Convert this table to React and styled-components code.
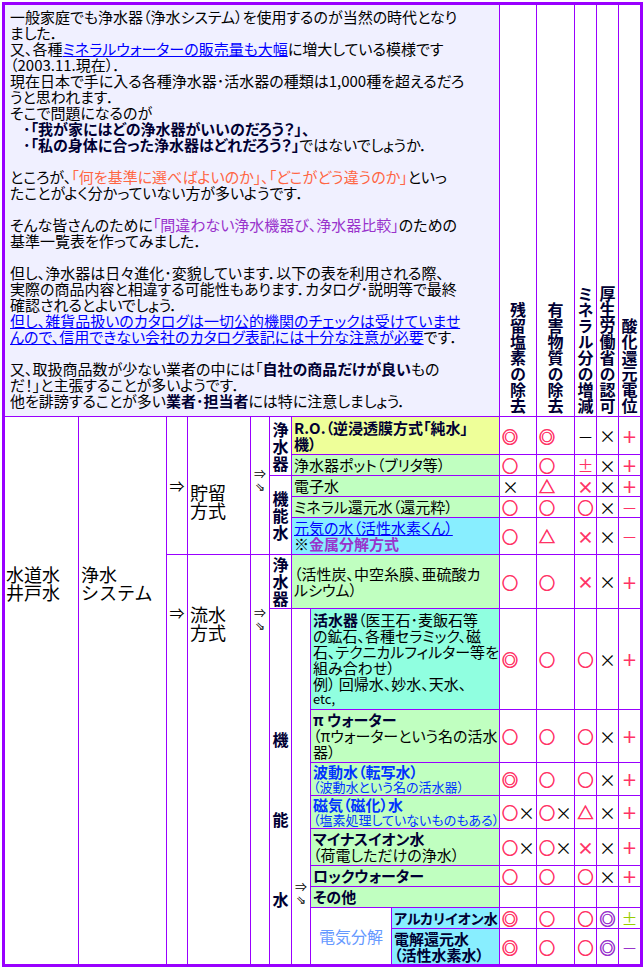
import React from 'react';
import styled, { createGlobalStyle } from 'styled-components';

const PURPLE = '#9900ff';
const PINK = '#ff3366';
const VIOLET = '#9933cc';
const LIME = '#99cc00';

const GlobalStyle = createGlobalStyle`
  html, body {
    margin: 0;
    padding: 0;
    background: #fff;
  }
  body {
    font-family: "Noto Sans CJK JP", "Noto Sans", sans-serif;
    color: #000;
  }
`;

// grid: every line of the table is the 1px gap showing the purple background
const Table = styled.div`
  display: grid;
  grid-template-columns: 73px 87px 20px 62px 18px 21px 18px 80px 107px 36px 37px 21px 21px 21px;
  grid-template-rows: 411px 37px 20px 20px 20px 36px 53px 100px 52px 32px 32px 36px 20px 20px 20px 35px;
  gap: 1px;
  width: max-content;
  margin: 2px 0 0 2px;
  border: 3px solid ${PURPLE};
  background: ${PURPLE};
`;

const Cell = styled.div`
  grid-row: ${(p) => p.$r};
  grid-column: ${(p) => p.$c};
  background: ${(p) => p.$bg || '#fff'};
  min-width: 0;
  overflow: hidden;
`;

const Intro = styled(Cell)`
  background: #f0f0ff;
  padding: 4px 0 0 5px;
  font-size: 15px;
  line-height: 16px;
  white-space: nowrap;
  font-feature-settings: "palt";
`;

const Line = styled.div`
  min-height: 16px;
`;

const Indent = styled.span`
  padding-left: 13px;
`;

const Strong = styled.b`
  font-weight: bold;
  color: ${(p) => p.$color || '#000033'};
`;

const Anchor = styled.a`
  color: #0000ff;
  text-decoration: underline;
`;

const Tint = styled.span`
  color: ${(p) => p.$color};
  font-weight: ${(p) => (p.$bold ? 'bold' : 'normal')};
`;

const HeadCell = styled(Cell)`
  display: flex;
  align-items: flex-end;
  justify-content: center;
  padding-bottom: 2px;
`;

const VText = styled.span`
  writing-mode: vertical-rl;
  font-size: 16px;
  line-height: 1;
  font-weight: bold;
  color: #000033;
`;

const BigText = styled(Cell)`
  padding: ${(p) => p.$pt}px 0 0 ${(p) => p.$pl}px;
  font-size: 18px;
  line-height: 18px;
`;

const Arrow = styled(Cell)`
  display: flex;
  flex-direction: column;
  align-items: center;
  justify-content: ${(p) => (p.$pt != null ? 'flex-start' : 'center')};
  padding-top: ${(p) => p.$pt || 0}px;
  font-size: ${(p) => (p.$small ? 12 : 15)}px;
  line-height: ${(p) => (p.$small ? 12 : 16)}px;
`;

const Kind = styled(Cell)`
  display: flex;
  flex-direction: column;
  align-items: center;
  justify-content: ${(p) => (p.$pt != null ? 'flex-start' : 'center')};
  padding-top: ${(p) => p.$pt || 0}px;
  gap: ${(p) => p.$gap || 0}px;
  font-size: 16px;
  line-height: 17px;
  font-weight: bold;
  color: #000033;
`;

const Item = styled(Cell)`
  display: flex;
  flex-direction: column;
  justify-content: center;
  padding-left: 2px;
  font-size: ${(p) => p.$size || 15}px;
  line-height: 16px;
  white-space: nowrap;
  font-feature-settings: "palt";
`;

const Small = styled.span`
  font-size: 13px;
  line-height: 14px;
  color: ${(p) => p.$color || 'inherit'};
`;

const Electro = styled(Cell)`
  display: flex;
  align-items: center;
  justify-content: center;
  font-size: 16px;
  color: #6699ff;
`;

const Value = styled(Cell)`
  display: flex;
  align-items: center;
  justify-content: ${(p) => (p.$left ? 'flex-start' : 'center')};
  padding-left: ${(p) => (p.$left ? 2 : 0)}px;
`;

// circles and triangles get a thin stroke so they read as heavy as the bitmap originals
const Sym = styled.span`
  color: ${(p) => p.$color};
  font-size: ${(p) => p.$size}px;
  line-height: 1;
  font-weight: ${(p) => (p.$bold ? 'bold' : 'normal')};
  -webkit-text-stroke: ${(p) => p.$stroke}px ${(p) => p.$color};
`;

const SHAPES = '◎○△';

const introLines = [
  <>一般家庭でも浄水器（浄水システム）を使用するのが当然の時代となり</>,
  <>ました．</>,
  <>又、各種<Anchor>ミネラルウォーターの販売量も大幅</Anchor>に増大している模様です</>,
  <>（2003.11.現在）．</>,
  <>現在日本で手に入る各種浄水器･活水器の種類は1,000種を超えるだろ</>,
  <>うと思われます．</>,
  <>そこで問題になるのが</>,
  <><Indent /><Strong>･「我が家にはどの浄水器がいいのだろう？」、</Strong></>,
  <><Indent /><Strong>･「私の身体に合った浄水器はどれだろう？」</Strong>ではないでしょうか．</>,
  null,
  <>ところが、<Tint $color="#ff6644">「何を基準に選べばよいのか」、「どこがどう違うのか」</Tint>といっ</>,
  <>たことがよく分かっていない方が多いようです．</>,
  null,
  <>そんな皆さんのために<Tint $color={VIOLET}>「間違わない浄水機器び、浄水器比較」</Tint>のための</>,
  <>基準一覧表を作ってみました．</>,
  null,
  <>但し、浄水器は日々進化･変貌しています．以下の表を利用される際、</>,
  <>実際の商品内容と相違する可能性もあります．カタログ･説明等で最終</>,
  <>確認されるとよいでしょう．</>,
  <><Anchor>但し、雑貨品扱いのカタログは一切公的機関のチェックは受けていませ</Anchor></>,
  <><Anchor>んので、信用できない会社のカタログ表記には十分な注意が必要</Anchor>です．</>,
  null,
  <>又、取扱商品数が少ない業者の中には「<Strong>自社の商品だけが良い</Strong>もの</>,
  <>だ！」と主張することが多いようです．</>,
  <>他を誹謗することが多い<Strong>業者･担当者</Strong>には特に注意しましょう．</>,
];

const heads = ['残留塩素の除去', '有害物質の除去', 'ミネラル分の増減', '厚生労働省の認可', '酸化還元電位'];

const P = PINK;
const K = '#000';
// values per body row (grid rows 2..16), each cell a list of [glyph, colour]
const values = [
  [[['◎', P]], [['◎', P]], [['－', K]], [['×', K]], [['＋', P]]],
  [[['○', P]], [['○', P]], [['±', P]], [['×', K]], [['＋', P]]],
  [[['×', K]], [['△', P]], [['×', P]], [['×', K]], [['＋', P]]],
  [[['○', P]], [['○', P]], [['○', P]], [['×', K]], [['－', P]]],
  [[['○', P]], [['△', P]], [['×', P]], [['×', K]], [['－', P]]],
  [[['○', P]], [['○', P]], [['×', P]], [['×', K]], [['＋', P]]],
  [[['◎', P]], [['○', P]], [['○', P]], [['×', K]], [['＋', P]]],
  [[['○', P]], [['○', P]], [['○', P]], [['×', K]], [['＋', P]]],
  [[['◎', P]], [['○', P]], [['○', P]], [['×', K]], [['＋', P]]],
  [[['○', P], ['×', K]], [['○', P], ['×', K]], [['△', P]], [['×', K]], [['＋', P]]],
  [[['○', P], ['×', K]], [['○', P], ['×', K]], [['×', P]], [['×', K]], [['＋', P]]],
  [[['○', P]], [['○', P]], [['○', P]], [['×', K]], [['＋', P]]],
  [[], [], [], [], []],
  [[['◎', P]], [['○', P]], [['○', P]], [['◎', VIOLET]], [['±', LIME]]],
  [[['◎', P]], [['○', P]], [['○', P]], [['◎', VIOLET]], [['－', VIOLET]]],
];

const chars = (text) => [...text].map((ch, i) => <span key={i}>{ch}</span>);

const GREEN = '#c0ffc0';
const CYAN = '#88eeff';

export default function App() {
  return (
    <>
      <GlobalStyle />
      <Table>
        <Intro $r="1" $c="1 / 10">
          {introLines.map((l, i) => (
            <Line key={i}>{l}</Line>
          ))}
        </Intro>
        {heads.map((h, i) => (
          <HeadCell key={h} $r="1" $c={`${10 + i}`}>
            <VText>{h}</VText>
          </HeadCell>
        ))}

        <BigText $r="2 / 17" $c="1" $pt={148} $pl={1}>
          水道水<br />井戸水
        </BigText>
        <BigText $r="2 / 17" $c="2" $pt={148} $pl={2}>
          浄水<br />システム
        </BigText>

        <Arrow $r="2 / 7" $c="3">⇒</Arrow>
        <BigText $r="2 / 7" $c="4" $pt={66} $pl={2}>
          貯留<br />方式
        </BigText>
        <Arrow $r="2 / 7" $c="5" $small $pt={51}>
          <span>⇒</span>
          <span>⇘</span>
        </Arrow>
        <Kind $r="2 / 4" $c="6">{chars('浄水器')}</Kind>
        <Kind $r="4 / 7" $c="6">{chars('機能水')}</Kind>

        <Arrow $r="7 / 17" $c="3" $pt={50}>⇒</Arrow>
        <BigText $r="7 / 17" $c="4" $pt={50} $pl={2}>
          流水<br />方式
        </BigText>
        <Arrow $r="7 / 17" $c="5" $small $pt={52}>
          <span>⇒</span>
          <span>⇘</span>
        </Arrow>
        <Kind $r="7" $c="6">{chars('浄水器')}</Kind>
        <Kind $r="8 / 17" $c="6" $pt={122} $gap={63}>{chars('機能水')}</Kind>
        <Arrow $r="8 / 17" $c="7" $small $pt={272}>
          <span>⇒</span>
          <span>⇘</span>
        </Arrow>

        <Item $r="2" $c="7 / 10" $bg="#eeff99">
          <Strong>R.O.（逆浸透膜方式「純水」</Strong>
          <Strong>機）</Strong>
        </Item>
        <Item $r="3" $c="7 / 10" $bg={GREEN}>浄水器ポット（ブリタ等）</Item>
        <Item $r="4" $c="7 / 10" $bg={GREEN}>電子水</Item>
        <Item $r="5" $c="7 / 10" $bg={GREEN}>ミネラル還元水（還元粋）</Item>
        <Item $r="6" $c="7 / 10" $bg={CYAN}>
          <span><Anchor>元気の水（活性水素くん）</Anchor></span>
          <span>※<Tint $color={VIOLET} $bold>金属分解方式</Tint></span>
        </Item>
        <Item $r="7" $c="7 / 10" $bg={GREEN}>
          <span>（活性炭、中空糸膜、亜硫酸カ</span>
          <span>ルシウム）</span>
        </Item>
        <Item $r="8" $c="8 / 10" $bg="#90ffe0">
          <span><Strong>活水器</Strong>（医王石･麦飯石等</span>
          <span>の鉱石、各種セラミック、磁</span>
          <span>石、テクニカルフィルター等を</span>
          <span>組み合わせ）</span>
          <span>例） 回帰水、妙水、天水、</span>
          <Small>etc,</Small>
        </Item>
        <Item $r="9" $c="8 / 10" $bg={GREEN}>
          <Strong>π ウォーター</Strong>
          <span>（πウォーターという名の活水</span>
          <span>器）</span>
        </Item>
        <Item $r="10" $c="8 / 10" $bg={GREEN}>
          <Strong $color="#0033ff">波動水（転写水）</Strong>
          <Small $color="#0033ff">（波動水という名の活水器）</Small>
        </Item>
        <Item $r="11" $c="8 / 10" $bg={GREEN}>
          <Strong $color="#0033ff">磁気（磁化）水</Strong>
          <Small $color="#0033ff">（塩素処理していないものもある）</Small>
        </Item>
        <Item $r="12" $c="8 / 10" $bg={GREEN}>
          <Strong>マイナスイオン水</Strong>
          <span>（荷電しただけの浄水）</span>
        </Item>
        <Item $r="13" $c="8 / 10" $bg={GREEN}>
          <Strong>ロックウォーター</Strong>
        </Item>
        <Item $r="14" $c="8 / 10" $bg={GREEN}>
          <Strong>その他</Strong>
        </Item>
        <Electro $r="15 / 17" $c="8">電気分解</Electro>
        <Item $r="15" $c="9" $bg={CYAN} $size={14}>
          <Strong>アルカリイオン水</Strong>
        </Item>
        <Item $r="16" $c="9" $bg={CYAN}>
          <Strong>電解還元水</Strong>
          <Strong>（活性水素水）</Strong>
        </Item>

        {values.map((row, ri) =>
          row.map((cell, ci) => (
            <Value key={`${ri}-${ci}`} $r={`${ri + 2}`} $c={`${10 + ci}`} $left={ci < 2}>
              {cell.map(([g, color], gi) => (
                <Sym
                  key={gi}
                  $color={color}
                  $size={g === '×' ? 17 : 16}
                  $bold={g === '＋' || (g === '×' && color !== K)}
                  $stroke={SHAPES.includes(g) ? 0.7 : 0}
                >
                  {g}
                </Sym>
              ))}
            </Value>
          ))
        )}
      </Table>
    </>
  );
}
